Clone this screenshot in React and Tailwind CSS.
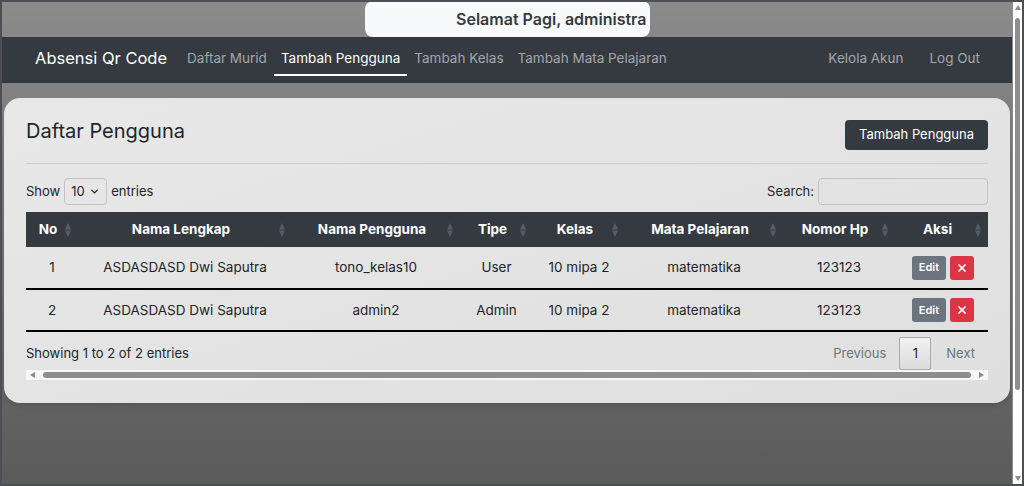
import { ChevronDown, X } from "lucide-react";

const font = { fontFamily: "Inter, 'Open Sans', sans-serif" };

const columns = [
  { label: "No", w: "w-[52px]" },
  { label: "Nama Lengkap", w: "w-[214px]" },
  { label: "Nama Pengguna", w: "w-[168px]" },
  { label: "Tipe", w: "w-[73px]" },
  { label: "Kelas", w: "w-[92px]" },
  { label: "Mata Pelajaran", w: "w-[158px]" },
  { label: "Nomor Hp", w: "w-[112px]" },
  { label: "Aksi", w: "w-[93px]" },
];

const users = [
  { no: 1, nama: "ASDASDASD Dwi Saputra", username: "tono_kelas10", tipe: "User", kelas: "10 mipa 2", mapel: "matematika", hp: "123123" },
  { no: 2, nama: "ASDASDASD Dwi Saputra", username: "admin2", tipe: "Admin", kelas: "10 mipa 2", mapel: "matematika", hp: "123123" },
];

function SortIcon() {
  return (
    <svg width="6" height="14" viewBox="0 0 6 14" className="absolute right-[7px] top-1/2 -translate-y-1/2">
      <path d="M3 0 L6 6.5 L0 6.5 Z" fill="#575d64" />
      <path d="M3 14 L6 7.5 L0 7.5 Z" fill="#575d64" />
    </svg>
  );
}

export default function App() {
  return (
    <div style={font} className="w-[1024px] h-[486px] flex border-2 border-[#4e4f55] overflow-hidden text-[#212529]">
      <div className="flex-1 h-full bg-gradient-to-b from-[#8b8b8b] via-[#717171] to-[#5b5b5b] flex flex-col border-r border-[#8a8a8a]">
        <div className="flex justify-center">
          <div className="w-[285px] h-[36px] bg-[#f8f9fa] rounded-lg overflow-hidden flex items-center justify-end pr-[3px] -mt-[1px]">
            <span className="whitespace-nowrap text-[16px] font-semibold text-[#343a40] pl-[82px] overflow-hidden">
              Selamat Pagi, administra
            </span>
          </div>
        </div>

        <nav className="h-[46px] bg-[#343a40] flex items-center pl-[33px] pr-[32px] text-[13.5px] pb-[3px]">
          <span className="text-white text-[16.5px] mr-[13px]">Absensi Qr Code</span>
          <a className="px-[7px] text-[#a3a6a9]">Daftar Murid</a>
          <a className="px-[7px] text-white relative h-full flex items-center">
            Tambah Pengguna
            <span className="absolute left-0 right-0 bottom-[4px] h-[2px] bg-white" />
          </a>
          <a className="px-[7px] text-[#a3a6a9]">Tambah Kelas</a>
          <a className="px-[7px] text-[#a3a6a9]">Tambah Mata Pelajaran</a>
          <div className="ml-auto flex gap-[26px] text-[#a3a6a9]">
            <a>Kelola Akun</a>
            <a>Log Out</a>
          </div>
        </nav>

        <div className="mx-[2px] mt-[15px] rounded-2xl bg-gradient-to-br from-[#e8e8e8] to-[#dfdfdf] shadow-md px-[22px] pt-[22px] pb-[23px]">
          <div className="flex items-start justify-between pb-[13px] border-b border-[#cfcfcf]">
            <h1 className="text-[20px] leading-[30px] -mt-[4px] text-[#212529]">Daftar Pengguna</h1>
            <button className="bg-[#343a40] text-white text-[13px] rounded px-[14px] h-[30px]">Tambah Pengguna</button>
          </div>

          <div className="flex items-center justify-between mt-[14px] text-[13px]">
            <div className="flex items-center gap-[4px]">
              <span>Show</span>
              <div className="w-[43px] h-[27px] border border-[#c3c3c3] rounded flex items-center justify-between px-[6px]">
                <span>10</span>
                <ChevronDown size={11} strokeWidth={3} />
              </div>
              <span>entries</span>
            </div>
            <div className="flex items-center gap-[4px]">
              <span>Search:</span>
              <div className="w-[170px] h-[27px] border border-[#c3c3c3] rounded" />
            </div>
          </div>

          <table className="w-[962px] mt-[7px] border-collapse text-[13.5px]">
            <thead>
              <tr className="bg-[#343a40] text-white h-[35px]">
                {columns.map((c) => (
                  <th key={c.label} className={`${c.w} relative pl-[10px] pr-[18px] text-center font-bold`}>
                    {c.label}
                    <SortIcon />
                  </th>
                ))}
              </tr>
            </thead>
            <tbody>
              {users.map((u) => (
                <tr key={u.no} className="h-[42px] border-b-2 border-black">
                  <td className="text-center">{u.no}</td>
                  <td className="text-center">{u.nama}</td>
                  <td className="text-center">{u.username}</td>
                  <td className="text-center">{u.tipe}</td>
                  <td className="text-center">{u.kelas}</td>
                  <td className="text-center">{u.mapel}</td>
                  <td className="text-center">{u.hp}</td>
                  <td>
                    <div className="flex justify-center gap-[4px] pl-[3px]">
                      <button className="w-[34px] h-[24px] bg-[#6c757d] text-white text-[11px] font-semibold rounded-[3px]">Edit</button>
                      <button className="w-[24px] h-[24px] bg-[#dc3545] text-white rounded-[3px] flex items-center justify-center">
                        <X size={12} strokeWidth={3.5} />
                      </button>
                    </div>
                  </td>
                </tr>
              ))}
            </tbody>
          </table>

          <div className="flex items-center justify-between mt-[5px] text-[13px]">
            <span>Showing 1 to 2 of 2 entries</span>
            <div className="flex items-center">
              <span className="text-[#6c757d] px-[13px]">Previous</span>
              <span className="w-[32px] h-[33px] border border-[#a9a9a9] rounded-[2px] bg-gradient-to-b from-[#f0f0f0] to-[#dcdcdc] flex items-center justify-center">1</span>
              <span className="text-[#6c757d] pl-[15px] pr-[13px]">Next</span>
            </div>
          </div>

          <div className="h-[10px] bg-[#f7f7f7] flex items-center px-[4px] gap-[8px]">
            <svg width="5" height="6" viewBox="0 0 5 6"><path d="M0 3 L5 0 L5 6 Z" fill="#8a8a8a" /></svg>
            <div className="flex-1 h-[6px] rounded-full bg-[#8d8d8d]" />
            <svg width="5" height="6" viewBox="0 0 5 6"><path d="M5 3 L0 0 L0 6 Z" fill="#8a8a8a" /></svg>
          </div>
        </div>
      </div>

      <div className="w-[10px] h-full bg-white flex flex-col items-center py-[3px]">
        <svg width="6" height="5" viewBox="0 0 6 5"><path d="M3 0 L6 5 L0 5 Z" fill="#8a8a8a" /></svg>
        <div className="w-[5px] mt-[8px] h-[372px] rounded-full bg-[#8d8d8d]" />
        <div className="flex-1" />
        <svg width="6" height="5" viewBox="0 0 6 5"><path d="M3 5 L6 0 L0 0 Z" fill="#8a8a8a" /></svg>
      </div>
    </div>
  );
}
